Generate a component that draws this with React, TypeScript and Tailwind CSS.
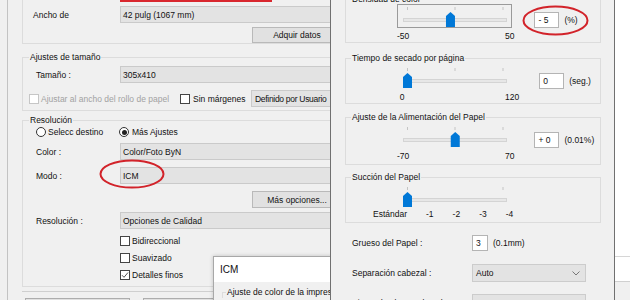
import React from "react";

function Combo({ text, className = "" }: { text: string; className?: string }) {
  return (
    <div className={`flex h-[17px] items-center border border-[#cacaca] bg-[#e3e3e3] pl-[2px] ${className}`}>
      {text}
    </div>
  );
}

function Btn({ text }: { text: string }) {
  return (
    <div className="flex h-[17px] w-[90px] items-center justify-center border border-[#b9b9b9] bg-[#e1e1e1]">
      {text}
    </div>
  );
}

function Check({ checked = false, disabled = false }: { checked?: boolean; disabled?: boolean }) {
  return (
    <span
      className={`flex h-[10px] w-[10px] shrink-0 items-center justify-center border bg-white ${
        disabled ? "border-[#c6c6c6]" : "border-[#444]"
      }`}
    >
      {checked && (
        <svg width="8" height="8" viewBox="0 0 8 8">
          <path d="M1 4.2 L3 6.3 L7 1.5" fill="none" stroke="#555" strokeWidth="1" />
        </svg>
      )}
    </span>
  );
}

function Radio({ checked = false }: { checked?: boolean }) {
  return (
    <span className="flex h-[10px] w-[10px] shrink-0 items-center justify-center rounded-full border border-[#333] bg-white">
      {checked && <span className="h-[5px] w-[5px] rounded-full bg-[#222]" />}
    </span>
  );
}

// slider drawing: 115x24, thumb travel 10.5 -> 106
function Slider({ pos, ticks = [10.5, 58, 106], focus = false }: { pos: number; ticks?: number[]; focus?: boolean }) {
  const cx = 10.5 + pos * 95.5;
  return (
    <svg width="115" height="24" viewBox="0 0 115 24" className="block">
      {focus && (
        <rect x="0.5" y="0.5" width="114" height="23" fill="none" stroke="#444" strokeDasharray="1 1" />
      )}
      {ticks.map((t) => (
        <line key={t} x1={t} x2={t} y1="3" y2="6" stroke="#c4c4c4" />
      ))}
      <rect x="6.5" y="14.5" width="103" height="3" fill="#e7e7e7" stroke="#d4d4d4" />
      <path d={`M${cx - 4.5} 23 V12 L${cx} 8 L${cx + 4.5} 12 V23 Z`} fill="#0078d7" />
    </svg>
  );
}

function ValueBox({ value, unit, w = "w-[25px]" }: { value: string; unit: string; w?: string }) {
  return (
    <div className="flex items-center">
      <span className={`flex h-[16px] ${w} items-center border border-[#b4b4b4] bg-white pl-[3px] whitespace-pre`}>
        {value}
      </span>
      <span className="ml-[5px]">{unit}</span>
    </div>
  );
}

function SliderGroup({
  title,
  pos,
  min,
  max,
  value,
  unit,
  focus = false,
  className = "",
}: {
  title: string;
  pos: number;
  min: string;
  max: string;
  value: string;
  unit: string;
  focus?: boolean;
  className?: string;
}) {
  return (
    <fieldset className={`border border-[#dcdcdc] ${className}`}>
      <legend className="ml-[5px] px-[1px] leading-[12px]">{title}</legend>
      <div className={`ml-[51px] flex items-start ${focus ? "-mt-[1px]" : "mt-[1px]"}`}>
        <div>
          <Slider pos={pos} focus={focus} />
          <div className="mt-[2px] flex leading-[12px]">
            <span className="w-[10px] text-center">{min}</span>
            <span className="ml-[98px]">{max}</span>
          </div>
        </div>
        <div className="ml-[20px] mt-[8px]">
          <ValueBox value={value} unit={unit} />
        </div>
      </div>
    </fieldset>
  );
}

function Chevron() {
  return (
    <svg width="8" height="5" viewBox="0 0 8 5" className="mr-[5px]">
      <path d="M0.5 0.5 L4 4 L7.5 0.5" fill="none" stroke="#777" />
    </svg>
  );
}

function LeftWindow() {
  return (
    <div className="relative flex h-[300px] w-[330px] shrink-0 overflow-hidden bg-[#f0f0f0]">
      <div className="h-full w-[8px] shrink-0 border-r border-[#c3c3c3]" />
      <div className="w-[360px] shrink-0 pl-[14px]">
        {/* Ancho group (top cut) */}
        <div className="border-b border-l border-[#dcdcdc] pt-[6px]">
          <div className="flex h-[17px] items-center">
            <span className="w-[97px] pl-[10px]">Ancho de</span>
            <Combo text="42 pulg (1067 mm)" className="flex-1" />
          </div>
          <div className="ml-[229px] mt-[4px] flex h-[16px] w-[90px] items-center justify-center border border-[#b9b9b9] bg-[#e1e1e1]">
            Adquir datos
          </div>
        </div>

        {/* Ajustes de tamaño */}
        <fieldset className="mt-[7px] border border-[#dcdcdc] pb-[3px]">
          <legend className="ml-[6px] px-[1px] leading-[12px]">Ajustes de tamaño</legend>
          <div className="mt-[3px] flex h-[17px] items-center">
            <span className="w-[97px] pl-[13px]">Tamaño :</span>
            <Combo text="305x410" className="flex-1" />
          </div>
          <div className="mt-[7px] flex h-[17px] items-center">
            <div className="ml-[6px] flex w-[151px] items-center text-[#a2a2a2]">
              <Check disabled />
              <span className="ml-[2px]">Ajustar al ancho del rollo de papel</span>
            </div>
            <div className="flex w-[71px] items-center">
              <Check />
              <span className="ml-[3px]">Sin márgenes</span>
            </div>
            <Combo text="Definido por Usuario" className="w-[110px] pl-[3px] tracking-[-0.3px]" />
          </div>
        </fieldset>

        {/* Resolución */}
        <fieldset className="mt-[3px] border border-[#dcdcdc] pb-[3px]">
          <legend className="ml-[6px] px-[1px] leading-[12px]">Resolución</legend>
          <div className="flex h-[12px] items-center">
            <div className="ml-[13px] flex w-[83px] items-center">
              <Radio />
              <span className="ml-[2px]">Selecc destino</span>
            </div>
            <Radio checked />
            <span className="ml-[3px]">Más Ajustes</span>
          </div>
          <div className="mt-[5px] flex h-[17px] items-center">
            <span className="w-[97px] pl-[13px]">Color :</span>
            <Combo text="Color/Foto ByN" className="flex-1" />
          </div>
          <div className="mt-[7px] flex h-[17px] items-center">
            <span className="w-[97px] pl-[13px]">Modo :</span>
            <Combo text="ICM" className="flex-1" />
          </div>
          <div className="ml-[229px] mt-[7px]">
            <Btn text="Más opciones..." />
          </div>
          <div className="mt-[4px] flex h-[17px] items-center">
            <span className="w-[97px] pl-[13px]">Resolución :</span>
            <Combo text="Opciones de Calidad" className="flex-1" />
          </div>
          <div className="mt-[3px] flex flex-col pl-[97px]">
            <div className="flex h-[17px] items-center">
              <Check />
              <span className="ml-[2px]">Bidireccional</span>
            </div>
            <div className="flex h-[17px] items-center">
              <Check />
              <span className="ml-[2px]">Suavizado</span>
            </div>
            <div className="flex h-[17px] items-center">
              <Check checked />
              <span className="ml-[2px]">Detalles finos</span>
            </div>
          </div>
        </fieldset>

        <div className="mt-[4px] border-t border-[#cfcfcf]" />
        <div className="mt-[6px] flex gap-[13px] pl-[3px]">
          <div className="h-[20px] w-[105px] border border-[#adadad] bg-[#e1e1e1]" />
          <div className="h-[20px] w-[200px] border border-[#adadad] bg-[#e1e1e1]" />
        </div>
      </div>

      {/* red annotation bar at top */}
      <div className="absolute left-[120px] top-0 h-[2px] w-[152px] bg-[#d9272e]" />

      {/* red ellipse around ICM */}
      <svg className="absolute left-[99px] top-[159px]" width="66" height="30" viewBox="0 0 66 30">
        <ellipse cx="33" cy="15" rx="31.5" ry="13.5" fill="none" stroke="#d2232a" strokeWidth="2" />
      </svg>

      {/* ICM popup */}
      <div className="absolute left-[213px] top-[256px] flex h-[60px] w-[150px] flex-col border border-[#a8a8a8] bg-[#f0f0f0] shadow-[0_0_4px_rgba(0,0,0,0.2)]">
        <div className="flex h-[25px] shrink-0 items-center bg-white pl-[6px] text-[10px]">ICM</div>
        <fieldset className="ml-[8px] mt-[4px] border-l border-t border-[#dcdcdc]">
          <legend className="ml-[3px] px-[1px] leading-[12px]">Ajuste de color de la impresora</legend>
        </fieldset>
      </div>
    </div>
  );
}

function Dialog() {
  return (
    <div className="relative flex h-[300px] w-[285px] shrink-0 flex-col overflow-hidden border-x border-[#707070] bg-[#f0f0f0] pl-[14px] pr-[13px]">
      <SliderGroup
        title="Densidad de color"
        pos={0.45}
        min="-50"
        max="50"
        value="- 5"
        unit="(%)"
        focus
        className="-mt-[7px]"
      />
      <SliderGroup
        title="Tiempo de secado por página"
        pos={0}
        min="0"
        max="120"
        value="0"
        unit="(seg.)"
        className="mt-[9px]"
      />
      <SliderGroup
        title="Ajuste de la Alimentación del Papel"
        pos={0.5}
        min="-70"
        max="70"
        value="+ 0"
        unit="(0.01%)"
        className="mt-[7px] pb-[2px]"
      />
      <fieldset className="mt-[6px] border border-[#dcdcdc] pb-[2px]">
        <legend className="ml-[5px] px-[1px] leading-[12px]">Succión del Papel</legend>
        <div className="ml-[51px] mt-[1px]">
          <Slider pos={0} ticks={[10.5, 106]} />
        </div>
        <div className="ml-[27px] flex gap-[19px] leading-[12px]">
          <span>Estándar</span>
          <span>-1</span>
          <span>-2</span>
          <span>-3</span>
          <span>-4</span>
        </div>
      </fieldset>

      <div className="ml-[7px] mt-[12px] flex h-[16px] items-center">
        <span className="w-[120px]">Grueso del Papel :</span>
        <ValueBox value="3" unit="(0.1mm)" w="w-[16px]" />
      </div>
      <div className="ml-[7px] mt-[13px] flex h-[18px] items-center">
        <span className="w-[120px]">Separación cabezal :</span>
        <div className="flex h-[18px] w-[114px] items-center justify-between border border-[#cccccc] bg-[#e3e3e3] pl-[3px]">
          <span>Auto</span>
          <Chevron />
        </div>
      </div>
      <div className="ml-[7px] mt-[12px] flex h-[18px] items-center">
        <span className="w-[120px]">Ajuste de altura cabezal :</span>
        <div className="flex h-[18px] w-[114px] items-center justify-between border border-[#cccccc] bg-[#e3e3e3] pl-[3px]">
          <span>Auto</span>
          <Chevron />
        </div>
      </div>

      {/* red ellipse around value */}
      <svg className="absolute left-[191px] top-[5px]" width="67" height="31" viewBox="0 0 67 31">
        <ellipse cx="33.5" cy="15.5" rx="32" ry="14" fill="none" stroke="#d2232a" strokeWidth="2" />
      </svg>
    </div>
  );
}

export default function App() {
  return (
    <div className="flex h-[300px] w-[630px] overflow-hidden bg-[#f0f0f0] font-['Liberation_Sans',Arial,sans-serif] text-[8.5px] leading-[12px] text-[#111]">
      <LeftWindow />
      <Dialog />
      <div className="flex w-[15px] shrink-0 flex-col">
        <div className="h-[257px] border-b border-[#d6d6d6] bg-white" />
        <div className="h-[24px] bg-white" />
        <div className="flex-1 border-t border-[#d0d0d0] bg-[#f0f0f0]" />
      </div>
    </div>
  );
}
